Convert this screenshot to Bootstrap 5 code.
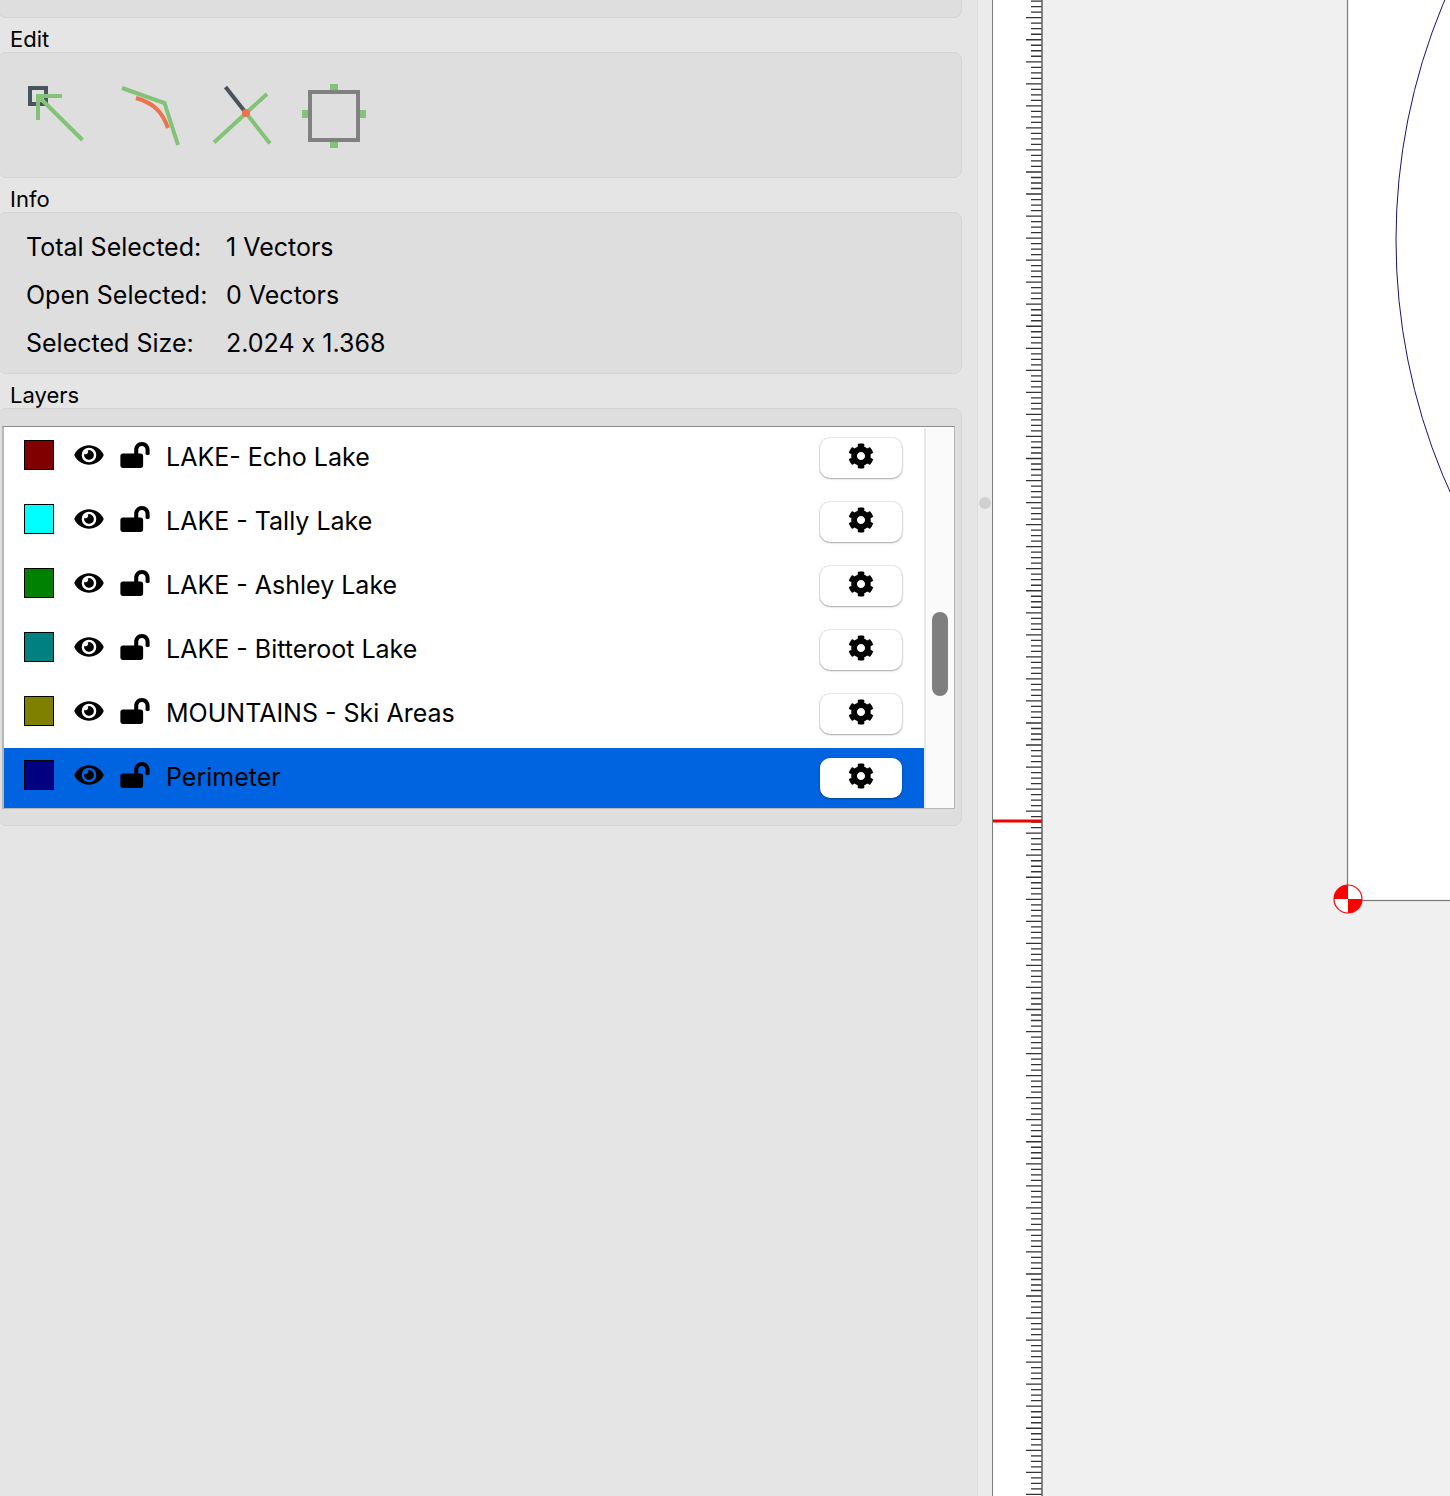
<!DOCTYPE html>
<html lang="en">
<head>
<meta charset="utf-8">
<meta name="viewport" content="width=device-width, initial-scale=1">
<title>Vector editor</title>
<link href="https://cdn.jsdelivr.net/npm/bootstrap@5.3.0/dist/css/bootstrap.min.css" rel="stylesheet">
<style>
  body { font-family: Inter, "Liberation Sans", sans-serif; font-size: 25px; line-height: 48px; color: #000; background: #e5e5e5; }
  .side-panel { width: 977px; max-width: 68%; padding-right: 15px; background: #e5e5e5; }
  .group-title { font-size: 22px; line-height: 34px; padding: 4px 0 0 10px; height: 34px; margin: 0; font-weight: 400; }
  .group-box { background: #dedede; border: 1px solid #d5d5d5; border-radius: 8px; margin-left: -2px; }
  .group-box.cut { height: 18px; border-top: 0; border-radius: 0 0 8px 8px; }
  .tool-row { padding: 31px 27px 29px; gap: 28px; }
  .plain-btn { border: 0; background: none; padding: 0; display: block; line-height: 0; color: #000; }
  .info-list { display: grid; grid-template-columns: 200px 1fr; padding: 10px 27px 6px; font-variant-ligatures: no-contextual; }
  .info-list dt, .info-list dd { font-weight: 400; margin: 0; }
  .layers-box { padding: 17px 6px 16px 3px; }
  .layer-frame { border: 1px solid #b6b6b6; border-left-width: 2px; border-top-color: #8c8c8c; padding-top: 1px; background: #fff; }
  .layer-list { gap: 4px; }
  .layer-item { height: 60px; padding: 0 22px 0 20px; }
  .layer-item.chosen { background: #0064e1; }
  .layer-name { padding-bottom: 2px; }
  .marks { margin-bottom: 6px; }
  .swatch { width: 30px; height: 30px; border: 1px solid #000; margin-right: 20px; }
  .eye, .lock { margin-right: 16px; }
  .gear-btn { width: 82px; height: 40px; border: 0; border-radius: 10px; background: #fff; padding: 0 0 4px; line-height: 0; color: #000; box-shadow: 0 0 1px 1px rgba(0,0,0,.08), 0 1px 2px rgba(0,0,0,.3); }
  .scroll-track { width: 30px; background: #fafafa; border-left: 2px solid #e8e8e8; padding: 184px 6px 0; }
  .scroll-thumb { width: 16px; height: 84px; border-radius: 8px; background: #7f7f7f; }
  .splitter { width: 15px; background: #ebebeb; border-left: 1px solid #dedede; padding: 497px 1px 0; }
  .knob { width: 12px; height: 12px; border-radius: 50%; background: #d0d0d0; }
  .ruler { width: 51px; background: #fff; border-left: 1px solid #7c7c7c; }
  .drawing { background: #f0f0f0; min-width: 0; }
  .fill-svg { position: absolute; top: 0; left: 0; width: 100%; height: 100%; }
</style>
<script src="https://cdn.jsdelivr.net/npm/bootstrap@5.3.0/dist/js/bootstrap.bundle.min.js"></script>
</head>
<body>
<svg width="0" height="0" class="position-absolute" aria-hidden="true">
  <symbol id="i-eye" viewBox="0 0 576 512"><path d="M572.52 241.4C518.29 135.59 410.93 64 288 64S57.68 135.64 3.48 241.41a32.35 32.35 0 0 0 0 29.19C57.71 376.41 165.07 448 288 448s230.32-71.64 284.52-177.41a32.35 32.35 0 0 0 0-29.19zM288 400a144 144 0 1 1 144-144 143.93 143.93 0 0 1-144 144zm0-240a95.31 95.31 0 0 0-25.31 3.79 47.85 47.85 0 0 1-66.9 66.9A95.78 95.78 0 1 0 288 160z"/></symbol>
  <symbol id="i-lock" viewBox="0 0 576 512"><path d="M423.5 0C339.5.3 272 69.5 272 153.5V224H48c-26.5 0-48 21.5-48 48v192c0 26.5 21.5 48 48 48h352c26.5 0 48-21.5 48-48V272c0-26.5-21.5-48-48-48h-48v-71.1c0-39.6 31.7-72.5 71.3-72.9 40-.4 72.7 32.1 72.7 72v80c0 13.3 10.7 24 24 24h32c13.3 0 24-10.7 24-24v-80C576 68 507.5-.3 423.5 0z"/></symbol>
  <symbol id="i-gear" viewBox="0 0 512 512"><path d="M487.4 315.7l-42.6-24.6c4.3-23.2 4.3-47 0-70.2l42.6-24.6c4.9-2.8 7.1-8.6 5.5-14-11.1-35.6-30-67.8-54.7-94.6-3.8-4.1-10-5.1-14.8-2.3L380.8 110c-17.9-15.4-38.5-27.3-60.8-35.1V25.8c0-5.6-3.9-10.5-9.4-11.7-36.7-8.2-74.3-7.8-109.2 0-5.5 1.2-9.4 6.1-9.4 11.7V75c-22.2 7.9-42.8 19.8-60.8 35.1L88.7 85.5c-4.9-2.8-11-1.9-14.8 2.3-24.7 26.7-43.6 58.9-54.7 94.6-1.7 5.4.6 11.2 5.5 14L67.3 221c-4.3 23.2-4.3 47 0 70.2l-42.6 24.6c-4.9 2.8-7.1 8.6-5.5 14 11.1 35.6 30 67.8 54.7 94.6 3.8 4.1 10 5.1 14.8 2.3l42.6-24.6c17.9 15.4 38.5 27.3 60.8 35.1v49.2c0 5.6 3.9 10.5 9.4 11.7 36.7 8.2 74.3 7.8 109.2 0 5.5-1.2 9.4-6.1 9.4-11.7v-49.2c22.2-7.9 42.8-19.8 60.8-35.1l42.6 24.6c4.9 2.8 11 1.9 14.8-2.3 24.7-26.7 43.6-58.9 54.7-94.6 1.5-5.5-.7-11.3-5.6-14.1zM256 336c-44.1 0-80-35.9-80-80s35.9-80 80-80 80 35.9 80 80-35.9 80-80 80z"/></symbol>
</svg>

<div class="d-flex min-vh-100 overflow-hidden">
  <aside class="side-panel flex-shrink-0">
    <div class="group-box cut"></div>

    <h2 class="group-title">Edit</h2>
    <div class="group-box tool-row d-flex">
      <button type="button" class="plain-btn" aria-label="Node edit">
        <svg width="64" height="64" fill="none" stroke-width="4"><rect x="4" y="4" width="16" height="16" stroke="#4b545d"/><path d="M36 12H12V36M12 12L56.500 56" stroke="#82c377"/></svg>
      </button>
      <button type="button" class="plain-btn" aria-label="Fillet">
        <svg width="64" height="64" fill="none" stroke-width="4"><path d="M4 4L46.500 19L60 61" stroke="#82c377"/><path d="M18 14C35 19 44 27 50 44" stroke="#ec7350"/></svg>
      </button>
      <button type="button" class="plain-btn" aria-label="Trim">
        <svg width="64" height="64" fill="none" stroke-width="4"><path d="M57 10L4 58.500M36 29L60 59.500" stroke="#82c377"/><path d="M15.500 3L36 29" stroke="#4b545d"/><circle cx="36" cy="29" r="4" fill="#ec7350"/></svg>
      </button>
      <button type="button" class="plain-btn" aria-label="Transform">
        <svg width="64" height="64"><path d="M28 0h8v6h-8zM28 58h8v6h-8zM0 26h6v8H0zM58 26h6v8h-6z" fill="#82c377"/><rect x="8" y="8" width="48" height="48" fill="none" stroke="#808080" stroke-width="4"/></svg>
      </button>
    </div>

    <h2 class="group-title">Info</h2>
    <dl class="group-box info-list mb-0">
      <dt>Total Selected:</dt><dd>1 Vectors</dd>
      <dt>Open Selected:</dt><dd>0 Vectors</dd>
      <dt>Selected Size:</dt><dd>2.024 x 1.368</dd>
    </dl>

    <h2 class="group-title">Layers</h2>
    <div class="group-box layers-box">
      <div class="layer-frame d-flex">
        <ul class="layer-list list-unstyled mb-0 d-flex flex-column flex-grow-1" id="layers"></ul>
        <div class="scroll-track"><div class="scroll-thumb"></div></div>
      </div>
    </div>
  </aside>

  <div class="splitter flex-shrink-0"><div class="knob"></div></div>

  <div class="ruler flex-shrink-0 position-relative">
    <svg class="fill-svg" aria-hidden="true">
      <path id="ticks" stroke="#333" stroke-width="1.300" fill="none"/>
      <path d="M49 0V4000" stroke="#666" stroke-width="1.600"/>
      <path d="M0 821H49" stroke="#f00000" stroke-width="3"/>
    </svg>
  </div>

  <main class="drawing flex-grow-1 position-relative overflow-hidden">
    <svg class="fill-svg" role="img" aria-label="Drawing area">
      <rect x="304.500" y="-10" width="4000" height="910.500" fill="#fff" stroke="#7a7a7a" stroke-width="1.200"/>
      <circle cx="968" cy="240" r="615" fill="none" stroke="#1a1270" stroke-width="1"/>
      <circle cx="305" cy="899" r="14" fill="#fff" stroke="#f00" stroke-width="1.200"/>
      <path d="M305 899V885A14 14 0 0 0 291 899ZM305 899V913A14 14 0 0 0 319 899Z" fill="#f00"/>
    </svg>
  </main>
</div>

<script>
  const layers = [
    ['LAKE- Echo Lake', '#800000'], ['LAKE - Tally Lake', '#00ffff'], ['LAKE - Ashley Lake', '#008000'],
    ['LAKE - Bitteroot Lake', '#008080'], ['MOUNTAINS - Ski Areas', '#808000'], ['Perimeter', '#000080']
  ];
  document.getElementById('layers').innerHTML = layers.map(([name, color], i) => `
    <li class="layer-item d-flex align-items-center${i === layers.length - 1 ? ' chosen' : ''}">
      <div class="marks d-flex align-items-center">
        <span class="swatch" style="background:${color}"></span>
        <button type="button" class="plain-btn eye" aria-label="Toggle visibility of ${name}"><svg width="30" height="26"><use href="#i-eye"/></svg></button>
        <button type="button" class="plain-btn lock" aria-label="Lock ${name}"><svg width="30" height="26"><use href="#i-lock"/></svg></button>
      </div>
      <span class="layer-name flex-grow-1 text-truncate">${name}</span>
      <button type="button" class="gear-btn" aria-label="Settings of ${name}"><svg width="26" height="26"><use href="#i-gear"/></svg></button>
    </li>`).join('');

  // Ruler ticks run both ways from the origin, every fourth one longer.
  const origin = 899.3, step = 5.51;
  let d = '';
  for (let n = -164; n < 500; n++) {
    d += `M${n % 4 ? 38 : 33} ${(origin + n * step).toFixed(2)}H49`;
  }
  document.getElementById('ticks').setAttribute('d', d);
</script>
</body>
</html>
